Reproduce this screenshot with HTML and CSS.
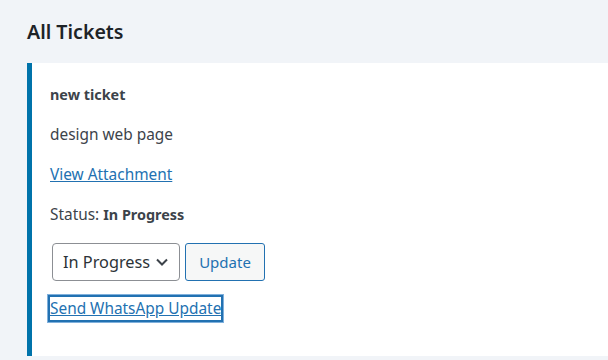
FILE: index.html
```html
<!DOCTYPE html>
<html>
<head>
<meta charset="utf-8">
<link rel="stylesheet" href="styles.css">
</head>
<body>
<div class="wrap">
  <h1 class="title">All Tickets</h1>
  <div class="card">
    <p class="name">new ticket</p>
    <p>design web page</p>
    <p><a class="link" href="#">View Attachment</a></p>
    <p>Status: <strong>In Progress</strong></p>
    <form class="form">
      <div class="select">In Progress
        <svg class="chev" width="14" height="10" viewBox="0 0 14 10"><path d="M2 2.5 L7 7.5 L12 2.5" fill="none" stroke="#3c434a" stroke-width="2"/></svg>
      </div>
      <button type="button" class="btn">Update</button>
    </form>
    <a class="link focus" href="#">Send WhatsApp Update</a>
  </div>
</div>
</body>
</html>
```
FILE: styles.css
```css
html, body { margin: 0; padding: 0; }
body {
  background: #f1f4f8;
  font-family: "Noto Sans", "Open Sans", sans-serif;
  font-size: 15.4px;
  color: #3c434a;
  width: 608px;
  height: 360px;
  overflow: hidden;
}
.wrap { padding: 0 0 0 27px; }
.title {
  margin: 0;
  padding-top: 19px;
  height: 63px;
  box-sizing: border-box;
  font-size: 19.6px;
  font-weight: 600;
  color: #1d2327;
  line-height: 26px;
}
.card {
  background: #fff;
  border-left: 5px solid #0073aa;
  padding: 22px 18px 0 18px;
  height: 293px;
  box-sizing: border-box;
}
.card p { margin: 0 0 20px; line-height: 20px; }
.card p.name { font-weight: 700; font-size: 14.4px; }
.card strong { font-weight: 700; font-size: 14.4px; }
.link { color: #2271b1; text-decoration: underline; }
.form { display: flex; gap: 5px; margin: -2px 0 14px 2px; }
.select {
  box-sizing: border-box;
  width: 128px;
  height: 38px;
  border: 1px solid #8c8f94;
  border-radius: 4px;
  display: flex;
  align-items: center;
  justify-content: space-between;
  padding: 0 10px 0 10px;
  font-size: 16.3px;
  color: #2c3338;
  background: #fff;
}
.chev { display: block; }
.btn {
  box-sizing: border-box;
  width: 80px;
  height: 38px;
  border: 1px solid #2271b1;
  border-radius: 3px;
  background: #f6f7f7;
  color: #2271b1;
  font-family: inherit;
  font-size: 15px;
  padding: 0;
}
.focus {
  display: inline-block;
  margin-left: -2px;
  padding: 4px 2px 3px 2px;
  line-height: 20px;
  outline: 2px solid #2271b1;
  outline-offset: -2px;
  box-shadow: 0 0 0 1px #7fb0dc;
}
```
